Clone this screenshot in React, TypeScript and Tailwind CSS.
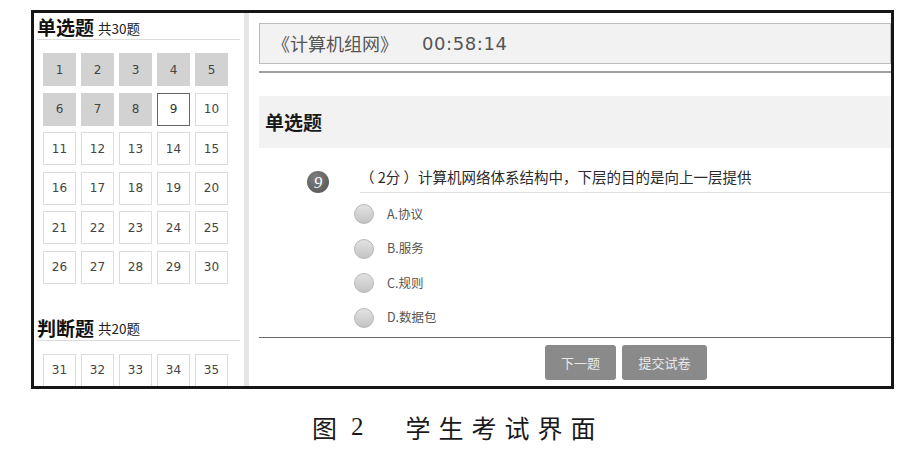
import React from "react";

const cjk = { fontFamily: '"Noto Sans CJK SC", "Noto Sans", sans-serif' };
const dv = { fontFamily: '"DejaVu Sans", "Noto Sans CJK SC", sans-serif' };

function Cell({ n, state }: { n: number; state: "done" | "cur" | "todo" }) {
  const cls =
    state === "done"
      ? "bg-[#d2d2d2] border border-[#d2d2d2] text-[#444]"
      : state === "cur"
      ? "bg-white border border-[#666] text-[#333]"
      : "bg-white border border-[#dcdcdc] text-[#444]";
  return (
    <div className={`h-[33px] w-[33px] flex items-center justify-center text-[12px] ${cls}`} style={dv}>
      {n}
    </div>
  );
}

function Heading({ title, sub }: { title: string; sub: string }) {
  return (
    <div className="h-[26px] border-b border-[#dcdcdc] flex items-center" style={cjk}>
      <span className="text-[19px] font-bold text-[#111] leading-[25px]">{title}</span>
      <span className="text-[13.5px] text-[#222] ml-[4px] mt-[3px]">{sub}</span>
    </div>
  );
}

function Radio({ label }: { label: string }) {
  return (
    <div className="h-[34.5px] flex items-center pl-[95px]">
      <div className="w-[20px] h-[20px] rounded-full border border-[#b8b8b8] bg-gradient-to-b from-[#e2e2e2] to-[#c4c4c4]" />
      <span className="ml-[13px] text-[12.5px] text-[#555]" style={cjk}>
        {label}
      </span>
    </div>
  );
}

export default function App() {
  const first = Array.from({ length: 30 }, (_, i) => i + 1);
  const second = [31, 32, 33, 34, 35];
  const stateOf = (n: number): "done" | "cur" | "todo" =>
    n <= 8 ? "done" : n === 9 ? "cur" : "todo";
  return (
    <div className="w-[916px] h-[452px] bg-white overflow-hidden">
      <div className="ml-[31px] mt-[10px] w-[863px] h-[379px] border-[3px] border-[#161616] flex">
        {/* left panel */}
        <div className="w-[210px] h-full pl-[3px] pr-[4px] overflow-hidden">
          <div className="mt-[1px]">
            <Heading title="单选题" sub="共30题" />
          </div>
          <div className="ml-[6px] mt-[13px] grid grid-cols-[repeat(5,33px)] gap-x-[5px] gap-y-[6.5px]">
            {first.map((n) => (
              <Cell key={n} n={n} state={stateOf(n)} />
            ))}
          </div>
          <div className="mt-[31px]">
            <Heading title="判断题" sub="共20题" />
          </div>
          <div className="ml-[6px] mt-[13px] grid grid-cols-[repeat(5,33px)] gap-x-[5px]">
            {second.map((n) => (
              <Cell key={n} n={n} state="todo" />
            ))}
          </div>
        </div>
        {/* separator stripe */}
        <div className="w-[5px] h-full bg-[#e6e6e6]" />
        {/* main */}
        <div className="ml-[10px] flex-1 flex flex-col">
          <div className="mt-[10px] h-[41px] border border-[#bdbdbd] bg-[#f2f2f2] flex items-center pl-[12px] text-[#555]">
            <span className="text-[18px]" style={cjk}>
              《计算机组网》
            </span>
            <span className="ml-[24px] text-[18px] tracking-[0.6px]" style={dv}>
              00:58:14
            </span>
          </div>
          <div className="mt-[7px] h-[2px] bg-[#a0a0a0]" />
          <div className="mt-[23px] h-[52px] bg-[#f2f2f2] flex items-center pl-[6px]">
            <span className="text-[19px] font-bold text-[#1a1a1a]" style={cjk}>
              单选题
            </span>
          </div>
          <div className="mt-[15px] flex items-start pl-[48px]">
            <div className="mt-[8px] w-[22px] h-[22px] rounded-full bg-[radial-gradient(circle_at_40%_35%,#808080,#505050)] flex items-center justify-center">
              <span
                className="text-white italic text-[17px] leading-none"
                style={{ fontFamily: '"Liberation Serif", serif' }}
              >
                9
              </span>
            </div>
            <div className="ml-[31px] flex-1 h-[30px] border-b border-[#e0e0e0] leading-[28px] text-[14.5px] text-[#2a2a2a]" style={cjk}>
              （ 2分 ）计算机网络体系结构中，下层的目的是向上一层提供
            </div>
          </div>
          <div className="mt-[4px] flex flex-col">
            <Radio label="A.协议" />
            <Radio label="B.服务" />
            <Radio label="C.规则" />
            <Radio label="D.数据包" />
          </div>
          <div className="mt-[2px] h-px bg-[#6a6a6a]" />
          <div className="mt-[7px] flex pl-[286px] gap-[6px]">
            <div className="w-[71px] h-[35px] rounded-[3px] bg-[#8a8a8a] flex items-center justify-center text-[13px] text-[#e8e8e8]" style={cjk}>
              下一题
            </div>
            <div className="w-[85px] h-[35px] rounded-[3px] bg-[#8a8a8a] flex items-center justify-center text-[13px] text-[#e8e8e8]" style={cjk}>
              提交试卷
            </div>
          </div>
        </div>
      </div>
      {/* caption */}
      <div className="mt-[23px] flex items-center pl-[312px] leading-[30px] text-[25px] text-[#1a1a1a]">
        <span style={cjk}>图</span>
        <span className="ml-[14px]" style={{ fontFamily: '"Liberation Serif", serif' }}>
          2
        </span>
        <span className="ml-[42px] tracking-[8px]" style={cjk}>
          学生考试界面
        </span>
      </div>
    </div>
  );
}
